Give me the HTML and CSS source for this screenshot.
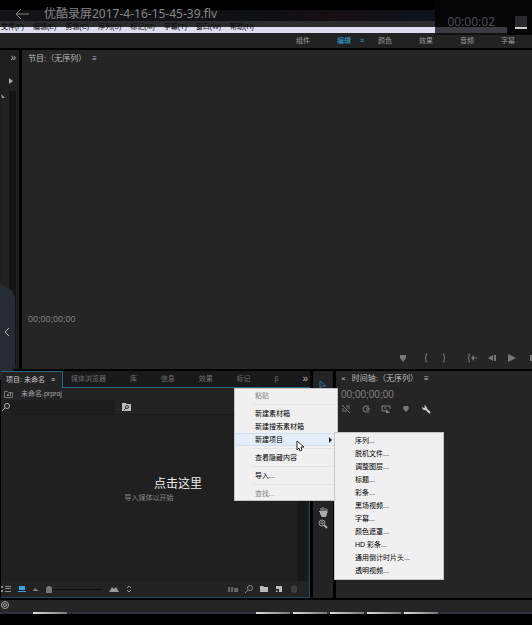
FILE: index.html
```html
<!DOCTYPE html>
<html lang="zh-CN">
<head>
<meta charset="utf-8">
<meta name="viewport" content="width=device-width, initial-scale=1">
<title>优酷录屏2017-4-16-15-45-39.flv</title>
<link rel="stylesheet" href="styles.css">
</head>
<body>
<div class="player">
  <header class="topbar">
    <div class="window-title"></div>
    <nav class="menubar">
      <button>文件(F)</button><button>编辑(E)</button><button>剪辑(C)</button><button>序列(S)</button><button>标记(M)</button><button>字幕(T)</button><button>窗口(W)</button><button>帮助(H)</button>
    </nav>
    <div class="video-title">
      <button class="back" aria-label="返回"><svg width="14" height="12" viewBox="0 0 14 12"><path d="M6 1L1 6l5 5M1 6h13" fill="none" stroke="#858585"/></svg></button>
      <h1>优酷录屏2017-4-16-15-45-39.flv</h1>
    </div>
    <div class="timer"><time>00:00:02</time><button class="stop" aria-label="停止"></button></div>
  </header>

  <nav class="workspaces">
    <button>组件</button>
    <button class="active">编辑<span class="burger">≡</span></button>
    <button>颜色</button><button>效果</button><button>音频</button><button>字幕</button>
  </nav>

  <main class="upper">
    <aside class="source">
      <button class="more" aria-label="更多">»</button>
      <button class="expand" aria-label="展开"><svg width="5" height="6" viewBox="0 0 5 6"><path d="M0 0l4 3-4 3z" fill="#aaa"/></svg></button>
      <div class="track"><svg width="5" height="5" viewBox="0 0 5 5"><path d="M0 0l4 4H1z" fill="#999"/></svg></div>
    </aside>
    <section class="program">
      <h2>节目:（无序列）<span class="burger">≡</span></h2>
      <div class="screen"></div>
      <div class="timecode">00;00;00;00</div>
      <div class="transport">
        <button aria-label="添加标记"><svg width="10" height="10" viewBox="0 0 10 10"><path d="M2 2h6v3L5 9 2 5z" fill="#777"/></svg></button>
        <div class="group marks">
          <button aria-label="标记入点"><svg width="10" height="10" viewBox="0 0 10 10"><path d="M6 1H5v3L4 5l1 1v3h1" fill="none" stroke="#777"/></svg></button>
          <button aria-label="标记出点"><svg width="10" height="10" viewBox="0 0 10 10"><path d="M4 1h1v3l1 1-1 1v3H4" fill="none" stroke="#777"/></svg></button>
        </div>
        <div class="group play">
          <button aria-label="转到入点"><svg width="10" height="10" viewBox="0 0 10 10"><path d="M3 1H2v3L1 5l1 1v3h1M5 5h5" fill="none" stroke="#777"/><path d="M4 5l3-3v6z" fill="#777"/></svg></button>
          <button aria-label="后退一帧"><svg width="10" height="10" viewBox="0 0 10 10"><path d="M6 2v6L1 5zM7 2h2v6H7z" fill="#777"/></svg></button>
          <button aria-label="播放"><svg width="10" height="10" viewBox="0 0 10 10"><path d="M1 1l8 4-8 4z" fill="#777"/></svg></button>
          <button aria-label="前进一帧"><svg width="5" height="10" viewBox="0 0 5 10"><path d="M3 2h2v6H3z" fill="#777"/></svg></button>
        </div>
      </div>
    </section>
    <button class="drawer" aria-label="展开侧栏"><svg width="6" height="10" viewBox="0 0 6 10"><path d="M5 1L1 5l4 4" fill="none" stroke="#bbb"/></svg></button>
  </main>

  <div class="lower">
    <section class="project">
      <nav class="tabs">
        <button class="active">项目: 未命名<span class="burger">≡</span></button>
        <div class="others">
          <button>媒体浏览器</button><button>库</button><button>信息</button><button>效果</button><button>标记</button><button>β</button>
          <button class="more" aria-label="更多">»</button>
        </div>
      </nav>
      <div class="body">
        <div class="file"><svg width="9" height="8" viewBox="0 0 9 8"><path d="M.5 1.500h3l1 1h4v5h-8z" fill="none" stroke="#777"/><path d="M3 4h2v2H3zM6 3h1v3H6z" fill="#888"/></svg><span>未命名.prproj</span></div>
        <div class="search">
          <label for="find"><svg width="8" height="8" viewBox="0 0 8 8"><circle cx="5" cy="3" r="2.500" fill="none" stroke="#aaa"/><path d="M3 5L0 8" stroke="#aaa"/></svg></label>
          <input id="find" type="text" aria-label="搜索">
          <button aria-label="新建搜索素材箱"><svg width="9" height="8" viewBox="0 0 9 8"><path d="M0 0h4l1 1h4v7H0z" fill="#bbb"/><circle cx="5" cy="4" r="1.500" fill="none" stroke="#333"/><path d="M4 5L2 7" stroke="#333"/></svg></button>
        </div>
        <div class="bin"><p>导入媒体以开始</p><div class="scroll"></div></div>
        <div class="tools-row">
          <button aria-label="列表视图"><svg width="10" height="8" viewBox="0 0 10 8"><path d="M0 1h2v2H0zM0 5h2v2H0zM4 1h6v1H4zM4 3h6v1H4zM4 6h6v1H4z" fill="#888"/></svg></button>
          <button aria-label="图标视图"><svg width="8" height="8" viewBox="0 0 8 8"><path d="M1 1h6v4H1zM0 6h8v1H0z" fill="#32a5dc"/></svg></button>
          <button aria-label="缩小"><svg width="6" height="8" viewBox="0 0 6 8"><path d="M0 6l2-3 2 2 2 1z" fill="#888"/></svg></button>
          <input type="range" min="0" max="100" value="0" aria-label="缩放">
          <button aria-label="放大"><svg width="10" height="8" viewBox="0 0 10 8"><path d="M0 7l3-5 2 2 2-2 3 5z" fill="#999"/></svg></button>
          <button aria-label="排序"><svg width="6" height="8" viewBox="0 0 6 8"><path d="M1 3l2-2 2 2M1 5l2 2 2-2" fill="none" stroke="#999"/></svg></button>
          <div class="actions">
            <button aria-label="自动匹配序列"><svg width="10" height="8" viewBox="0 0 10 8"><path d="M0 2h2v5H0zM3 2h2v5H3zM6 3h4v4H6z" fill="#666"/></svg></button>
            <button aria-label="查找"><svg width="8" height="8" viewBox="0 0 8 8"><circle cx="5" cy="3" r="2.500" fill="none" stroke="#888"/><path d="M3 5L0 8" stroke="#888"/></svg></button>
            <button aria-label="新建素材箱"><svg width="8" height="8" viewBox="0 0 8 8"><path d="M0 1h3l1 1h4v5H0z" fill="#bbb"/></svg></button>
            <button aria-label="新建项"><svg width="8" height="8" viewBox="0 0 8 8"><path d="M1 1h6v6H4V4H1z" fill="#bbb"/><path d="M1 5l2 2H1z" fill="#bbb"/></svg></button>
            <button aria-label="清除"><svg width="8" height="8" viewBox="0 0 8 8"><path d="M1 2h6M3 1h2M2 3v4h4V3M4 3v4" fill="none" stroke="#555"/></svg></button>
          </div>
        </div>
      </div>
    </section>

    <aside class="toolbox">
      <button aria-label="选择工具"><svg width="8" height="10" viewBox="0 0 8 10"><path d="M1 1v7l2-2h4z" fill="none" stroke="#287096"/></svg></button>
      <div class="handtools">
        <button aria-label="手形工具"><svg width="10" height="11" viewBox="0 0 10 11"><path d="M3 6V2M5 6V1M7 6V2M9 7V3M3 7L1 5" fill="none" stroke="#aaa"/><path d="M2 5h7v3L8 11H4L2 8z" fill="#aaa"/></svg></button>
        <button aria-label="缩放工具"><svg width="10" height="10" viewBox="0 0 10 10"><circle cx="4" cy="4" r="3" fill="none" stroke="#999"/><path d="M2 4h4M4 2v4" stroke="#888"/><path d="M6 6l3 3" stroke="#aaa" stroke-width="2"/></svg></button>
      </div>
    </aside>

    <section class="timeline">
      <h2><span class="close">×</span>时间轴:（无序列）<span class="burger">≡</span></h2>
      <div class="timecode">00;00;00;00</div>
      <div class="options">
        <button aria-label="嵌套"><svg width="10" height="10" viewBox="0 0 10 10"><path d="M1 1l8 8M2 8V4M5 2h4M6 4h3M3 7h3" fill="none" stroke="#777"/></svg></button>
        <button aria-label="对齐"><svg width="10" height="10" viewBox="0 0 10 10"><path d="M8 2H5a3 3 0 0 0 0 6h3M5 4h3v2H5" fill="none" stroke="#808080"/></svg></button>
        <button aria-label="链接选择项"><svg width="10" height="10" viewBox="0 0 10 10"><path d="M1 2h8v3M1 2v5h4M3 4h2" fill="none" stroke="#808080"/><path d="M5 5l4 4H5z" fill="#808080"/></svg></button>
        <button aria-label="添加标记"><svg width="10" height="10" viewBox="0 0 10 10"><path d="M3 2h4l1 2-1 2-2 2-2-2-1-2z" fill="#777"/></svg></button>
        <button aria-label="时间轴显示设置"><svg width="10" height="10" viewBox="0 0 10 10"><path d="M4 4l5 5" stroke="#ccc" stroke-width="2"/><path d="M3 1l1 2-1 1-2-1c0 2 2 4 4 3 2-1 1-4-2-5z" fill="#ccc"/></svg></button>
      </div>
    </section>

    <div class="menu context" role="menu">
      <button disabled>粘贴</button><hr>
      <button>新建素材箱</button>
      <button>新建搜索素材箱</button>
      <button class="hover">新建项目<svg width="3" height="6" viewBox="0 0 3 6"><path d="M0 0l3 3-3 3z" fill="#222"/></svg></button><hr>
      <button>查看隐藏内容</button><hr>
      <button>导入...</button><hr>
      <button disabled>查找...</button>
    </div>
    <div class="menu submenu" role="menu">
      <button>序列...</button><button>脱机文件...</button><button>调整图层...</button><button>标题...</button><button>彩条...</button><button>黑场视频...</button><button>字幕...</button><button>颜色遮罩...</button><button>HD 彩条...</button><button>通用倒计时片头...</button><button>透明视频...</button>
    </div>
    <svg class="cursor" width="8" height="12" viewBox="0 0 8 12"><path d="M1 1v9l2-2 1 3 2-1-1-3h3z" fill="#fff" stroke="#222"/></svg>
    <div class="caption">点击这里</div>
  </div>

  <footer class="status">
    <svg width="9" height="9" viewBox="0 0 9 9"><circle cx="4" cy="4" r="3.500" fill="none" stroke="#aaa"/><circle cx="4" cy="4" r="1.500" fill="none" stroke="#aaa"/></svg>
  </footer>
  <div class="taskbar"><i></i><i class="apps"></i><i></i><i></i><i></i><i></i></div>
</div>
</body>
</html>
```
FILE: styles.css
```css
* {
  box-sizing: border-box;
}

body {
  margin: 0;
  background: #000;
  color: #aaa;
  font: 7px/12px "Liberation Sans", "Noto Sans CJK SC", sans-serif;
}

button {
  margin: 0;
  padding: 0;
  border: 0;
  background: none;
  color: inherit;
  font: inherit;
  white-space: nowrap;
  flex-shrink: 0;
}

svg {
  display: block;
}

h1, h2, p {
  margin: 0;
  font-weight: normal;
}

.burger {
  margin-left: 6px;
}

.player {
  display: flex;
  flex-direction: column;
  min-height: 100vh;
  padding-bottom: 11px;
  overflow: hidden;
}

/* Top bar */
.topbar {
  position: relative;
  padding-top: 10px;
}

.window-title {
  height: 11px;
  background: linear-gradient(90deg, #141416, #0f1013 50%, #160f12 62%, #0e141b 80%, #0b0d10);
}

.menubar {
  display: flex;
  gap: 9px;
  height: 12px;
  padding-left: 1px;
  background: linear-gradient(#2c2c2f 6px, #dcdcec 6px);
  color: #08080c;
}

.video-title {
  position: absolute;
  top: 5px;
  left: 15px;
  display: flex;
  align-items: center;
  gap: 15px;
}

.video-title h1 {
  color: #858585;
  font: 12px/18px "Noto Sans", "Noto Sans CJK SC", sans-serif;
}

.timer {
  position: absolute;
  top: 0;
  right: 0;
  display: flex;
  align-items: flex-end;
  gap: 20px;
  height: 35px;
  padding: 0 5px 4px 12px;
  background: linear-gradient(90deg, transparent 72px, #050506 72px), linear-gradient(#050506 27px, #3c3b42 27px, #3c3b42 33px, #111 33px);
}

.timer time {
  color: #4c4c52;
  font: 12px/18px "Noto Sans", sans-serif;
}

.stop {
  width: 12px;
  height: 13px;
  margin-bottom: 2px;
  border-bottom: 2px solid #ccc;
  background: #29292b;
}

.workspaces {
  display: flex;
  justify-content: flex-end;
  gap: 27px;
  height: 15px;
  padding: 2px 17px 0 0;
  background: #222;
  color: #999;
}

.workspaces button {
  height: 12px;
}

.workspaces .active {
  display: flex;
  width: 14px;
  color: #2fa5de;
}

.workspaces .burger {
  margin-left: 9px;
}

/* Upper panels */
.upper {
  position: relative;
  display: flex;
  flex: 319 1 0;
  gap: 3px;
  margin: 2px 0;
}

.source {
  display: flex;
  flex-direction: column;
  width: 19px;
  padding: 2px 3px 4px 1px;
  background: #1e1e1e;
}

.more {
  align-self: flex-end;
  color: #bbb;
  font-size: 10px;
}

.expand {
  margin: 14px 0 7px 8px;
  align-self: flex-start;
}

.track {
  flex: 1;
  padding-top: 3px;
  background: linear-gradient(90deg, #222 8px, #131313 8px);
}

.program {
  display: flex;
  flex: 1;
  flex-direction: column;
  min-width: 0;
  padding: 3px 0 6px 6px;
  background: #252525;
}

h2 {
  color: #bbb;
  font-size: 8px;
  line-height: 12px;
}

.screen {
  flex: 1;
}

.timecode {
  color: #808080;
  font-size: 9px;
}

.transport {
  display: flex;
  justify-content: flex-end;
  margin-top: 28px;
}

.group {
  display: flex;
  gap: 10px;
}

.marks {
  gap: 8px;
  margin: 0 18px 0 13px;
}

.drawer {
  position: absolute;
  top: 233px;
  left: 0;
  width: 15px;
  height: 97px;
  padding-left: 4px;
  background: #252d32;
  clip-path: polygon(0 0, 80% 8%, 100% 14%, 100% 86%, 80% 92%, 0 100%);
}

/* Lower panels */
.lower {
  position: relative;
  display: grid;
  grid-template-columns: 310px 20px minmax(0, 1fr);
  flex: 227 1 0;
  gap: 3px;
}

.project {
  display: flex;
  flex-direction: column;
  min-width: 0;
  margin-left: 1px;
  background: #232323;
}

.tabs {
  display: flex;
  height: 17px;
  background: #191919;
  color: #707070;
}

.tabs .active {
  width: 62px;
  padding-left: 5px;
  border: 1px solid #2c6684;
  border-width: 1px 1px 0 0;
  background: #232323;
  color: #ccc;
  text-align: left;
}

.others {
  display: flex;
  flex: 1;
  align-items: center;
  justify-content: space-between;
  min-width: 0;
  padding: 0 2px 0 8px;
  border-bottom: 1px solid #2c6684;
}

.others .more {
  align-self: center;
}

.body {
  display: flex;
  flex: 1;
  flex-direction: column;
  border: 1px solid #24495b;
  border-top: 0;
  border-left: 0;
}

.file {
  display: flex;
  align-items: center;
  gap: 8px;
  padding-left: 3px;
  line-height: 12px;
}

.search {
  display: flex;
  align-items: center;
  height: 15px;
  padding-left: 1px;
  border-bottom: 1px solid #1a1a1a;
}

.search input {
  width: 105px;
  height: 14px;
  margin-right: 7px;
  padding: 0 2px;
  border: 0;
  background: #1d1d1d;
  color: #aaa;
  font: inherit;
}

.bin {
  display: flex;
  flex: 1;
  align-items: center;
  background: #202020;
}

.bin p {
  flex: 1;
  color: #888;
  text-align: center;
}

.scroll {
  align-self: stretch;
  width: 10px;
  margin-right: 2px;
  background: #181818;
}

.tools-row {
  display: flex;
  align-items: center;
  gap: 7px;
  height: 16px;
}

.tools-row input {
  appearance: none;
  width: 56px;
  height: 8px;
  margin: 0;
  background: linear-gradient(transparent 4px, #101010 4px, #101010 5px, transparent 5px);
}

.tools-row input::-webkit-slider-thumb {
  appearance: none;
  width: 6px;
  height: 7px;
  border-radius: 3px 3px 0 0;
  background: #777;
}

.actions {
  display: flex;
  gap: 7px;
  margin: 0 11px 0 auto;
}

.toolbox {
  display: flex;
  flex-direction: column;
  align-items: center;
  padding-top: 9px;
  background: #232323;
}

.handtools {
  display: flex;
  flex-direction: column;
  gap: 2px;
  margin-top: 116px;
}

.timeline {
  padding: 2px 0 0 5px;
  background: #252525;
}

.close {
  margin-right: 6px;
}

.timeline .timecode {
  margin-top: 4px;
  font-size: 10px;
}

.options {
  display: flex;
  gap: 10px;
  margin-top: 3px;
}

/* Pop-up menus */
.menu {
  position: absolute;
  display: flex;
  flex-direction: column;
  border: 1px solid #c4c4c4;
  background: #f0f0f0;
  color: #000;
}

.menu button {
  display: flex;
  align-items: center;
  justify-content: space-between;
  height: 13px;
  padding: 0 5px 0 20px;
}

.menu button:disabled {
  color: #808080;
}

.menu hr {
  height: 1px;
  margin: 2px 1px 2px 18px;
  border: 0;
  background: #e4e4e4;
}

.menu .hover {
  border: 1px solid #cfe0f0;
  border-width: 1px 0;
  border-radius: 2px;
  background: #e4eef8;
}

.context {
  top: 17px;
  left: 234px;
  width: 104px;
}

.submenu {
  top: 61px;
  left: 334px;
  width: 110px;
  padding: 1px 0 2px;
}

.cursor {
  position: absolute;
  top: 69px;
  left: 296px;
}

.caption {
  position: absolute;
  top: 104px;
  left: 154px;
  color: #eee;
  font-size: 12px;
  line-height: 18px;
}

/* Status and task bar */
.status {
  height: 12px;
  margin-top: 2px;
  padding: 1px;
  background: #252525;
}

.taskbar {
  display: flex;
  gap: 3px;
  height: 2px;
  padding-left: 33px;
  background: #2c3038;
}

.taskbar i {
  width: 34px;
  background: linear-gradient(90deg, #ddd, #777);
}

.taskbar .apps {
  margin-left: 186px;
}
```
